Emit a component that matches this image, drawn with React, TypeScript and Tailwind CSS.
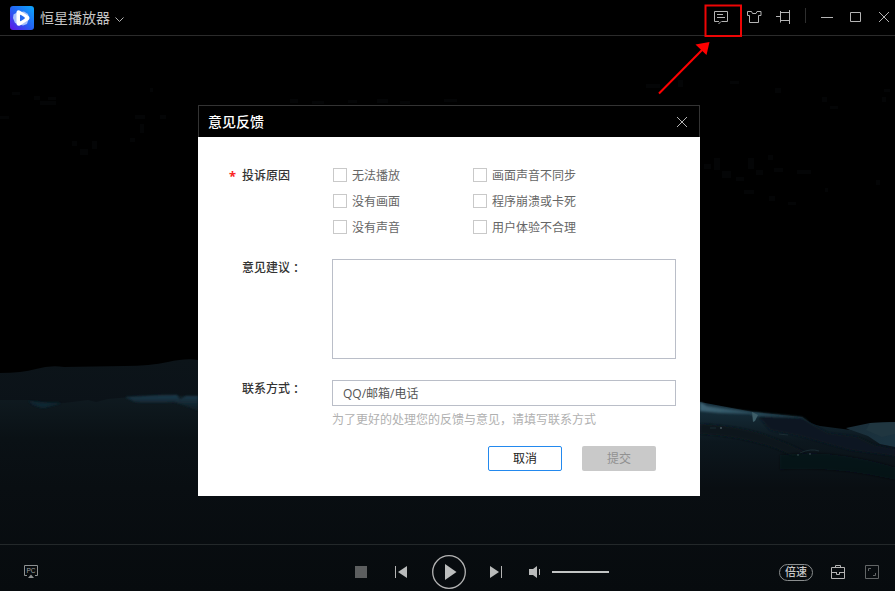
import type { ReactNode } from "react";

const reasons = [
  ["无法播放", "画面声音不同步"],
  ["没有画面", "程序崩溃或卡死"],
  ["没有声音", "用户体验不合理"],
];

// Faint compression blocks in the dark sky: x, y, width, height
const specks = [
  [12, 92, 8, 3], [34, 96, 6, 4], [40, 101, 16, 4], [48, 97, 8, 3], [0, 116, 9, 3], [72, 141, 5, 5], [80, 149, 8, 6],
  [92, 141, 5, 8], [135, 115, 10, 4], [140, 124, 4, 9], [130, 138, 5, 4], [160, 115, 6, 4], [150, 88, 3, 4],
  [290, 99, 8, 4], [312, 101, 12, 3], [348, 100, 9, 3], [377, 99, 11, 4], [400, 101, 10, 3], [444, 99, 13, 3],
  [646, 84, 14, 4], [678, 80, 5, 7], [730, 81, 9, 3], [775, 88, 6, 5], [822, 97, 5, 5], [830, 106, 8, 3],
  [884, 89, 6, 3], [882, 97, 4, 5], [704, 164, 7, 5], [714, 158, 6, 12], [722, 171, 9, 7], [736, 177, 8, 4],
  [748, 158, 6, 11], [756, 170, 7, 5], [768, 155, 5, 5], [774, 168, 9, 4], [797, 170, 14, 4], [744, 190, 10, 4],
  [769, 196, 6, 5], [788, 202, 8, 3], [825, 188, 3, 4], [876, 180, 4, 5],
];

function Scene() {
  return (
    <svg className="absolute inset-0" width="895" height="591" viewBox="0 0 895 591" fill="none">
      <defs>
        <linearGradient id="back" x1="0" y1="360" x2="0" y2="405" gradientUnits="userSpaceOnUse">
          <stop stopColor="#0c1419" />
          <stop offset="1" stopColor="#0b1218" />
        </linearGradient>
        <linearGradient id="front" x1="0" y1="396" x2="0" y2="591" gradientUnits="userSpaceOnUse">
          <stop stopColor="#0f1a20" />
          <stop offset=".22" stopColor="#0a1115" />
          <stop offset=".47" stopColor="#090e12" />
          <stop offset="1" stopColor="#070b0e" />
        </linearGradient>
        <linearGradient id="right" x1="0" y1="404" x2="0" y2="591" gradientUnits="userSpaceOnUse">
          <stop stopColor="#17303d" />
          <stop offset=".2" stopColor="#0c171e" />
          <stop offset=".45" stopColor="#090e12" />
          <stop offset="1" stopColor="#070b0e" />
        </linearGradient>
        <linearGradient id="far" x1="860" y1="422" x2="880" y2="447" gradientUnits="userSpaceOnUse">
          <stop stopColor="#1b2f3a" />
          <stop offset="1" stopColor="#1a3340" />
        </linearGradient>
        <linearGradient id="glow" x1="0" y1="395" x2="0" y2="422" gradientUnits="userSpaceOnUse">
          <stop stopColor="#1c3b4d" />
          <stop offset="1" stopColor="#0b141a" stopOpacity="0" />
        </linearGradient>
        <linearGradient id="snow" x1="700" y1="0" x2="808" y2="0" gradientUnits="userSpaceOnUse">
          <stop stopColor="#3f6576" />
          <stop offset=".5" stopColor="#294b5a" />
          <stop offset="1" stopColor="#1b333e" />
        </linearGradient>
        <filter id="soft" x="-10%" y="-30%" width="120%" height="160%">
          <feGaussianBlur stdDeviation="1" />
        </filter>
      </defs>
      {specks.map(([x, y, w, h]) => (
        <rect key={`${x}-${y}`} x={x} y={y} width={w} height={h} fill="#040506" />
      ))}
      <path d="M0 373Q22 373 36 369T64 367L125 366Q150 366 168 362T198 360V420H0Z" fill="url(#back)" />
      <path d="M0 400H28Q45 403 64 403L88 400 96 402 108 399 130 397 160 395 198 396V470L700 470V591H0Z" fill="url(#front)" />
      <g filter="url(#soft)">
        <path d="M125 397L157 395.500 177 395 180 399 186 396H198V411Q185 405 174 402Q150 403 135 402Z" fill="url(#glow)" />
        <path d="M28 401Q45 403 62 403L44 408Q34 407 28 401Z" fill="#102531" />
      </g>
      <path d="M846 428L870 423 895 422V451L874 442Z" fill="url(#far)" />
      <path d="M870 423L895 422V434L882 437 866 430Z" fill="#203640" />
      <path d="M700 402L753 412 802 417Q811 424 820 426L851 430 868 436 880 444 895 447V591H690V402Z" fill="url(#right)" />
      <g filter="url(#soft)">
        <path d="M700 402L707 406 752 412 802 417 808 421 781 417 758 417 750 414 720 413 700 411Z" fill="url(#snow)" />
        <path d="M758 416L802 418 817 427 828 433 858 437 874 445 895 449V456L850 450 800 436 770 430Z" fill="#0b1921" />
        <path d="M700 424Q740 426 765 435T805 452L793 456Q755 437 700 434Z" fill="#0a151c" />
      </g>
      <path d="M752 412L758 415 755 421 753 422Z" fill="#3e5e68" />
      <path d="M710 428H716M779 434L788 435M800 453Q811 448 819 451" stroke="#1b2c33" />
      <path d="M720 428H722M797 455H799M809 454H811" stroke="#65747a" />
      <g filter="url(#soft)">
        <path d="M780 455Q830 448 895 467V480Q830 466 780 470Z" fill="#0a0e11" opacity=".5" />
      </g>
    </svg>
  );
}

function Icon({ w, h, className = "", children }: { w: number; h: number; className?: string; children: ReactNode }) {
  return (
    <svg width={w} height={h} viewBox={`0 0 ${w} ${h}`} fill="none" stroke="#b4b4b4" className={`shrink-0 ${className}`}>
      {children}
    </svg>
  );
}

function TitleBar() {
  return (
    <header className="relative flex h-9 shrink-0 items-start border-b border-[#2b2b2b] bg-black">
      <svg className="mt-1.5 ml-2.5 shrink-0" width="24" height="24" viewBox="0 0 24 24">
        <defs>
          <linearGradient id="logo" x1="2" y1="23" x2="22" y2="2" gradientUnits="userSpaceOnUse">
            <stop stopColor="#5a1be6" />
            <stop offset=".5" stopColor="#2462f4" />
            <stop offset="1" stopColor="#109ffb" />
          </linearGradient>
        </defs>
        <rect width="24" height="24" rx="3" fill="url(#logo)" />
        <path d="M3.500 8.500L7 6.500 14 5.500 18 8 19 12 17 18 13 19.500 5 17 3 12Z" fill="#a8c1fb" />
        <path d="M6.500 6Q7 3.500 9.500 4.500L18.500 10Q20.500 12 18.500 14L10 19.500Q7 20.500 6.500 18Z" fill="#fff" />
        <path d="M10 9.500Q10 8.500 11 9L14.500 11.200Q15.300 12 14.500 12.800L11 15Q10 15.500 10 14.500Z" fill="#2468ee" />
      </svg>
      <h1 className="mt-[7px] ml-1.5 text-sm leading-5 text-[#c4c4c4]">恒星播放器</h1>
      <Icon w={9} h={6} className="mt-[17px] ml-[5px]"><path d="M.5 .5L4.500 4.500 8.500 .5" /></Icon>
      <div className="ml-auto flex h-[35px] items-start">
        <Icon w={14} h={14} className="mt-[11px]">
          <path d="M5 10.500H.5V.5H13.500V10.500H7.500M3 3.500H9M3 6.500H11M7 10.500L4.500 13" />
        </Icon>
        <Icon w={15} h={13} className="mt-[11px] ml-[19px]">
          <path d="M.5 .5H4.500L5.500 2.500H9L10 .5H14V4.500H11.500V11.500H2.500V4.500H.5Z" />
        </Icon>
        <Icon w={14} h={14} className="mt-[10px] ml-[14px]">
          <path d="M0 6.500H4.500M4.500 1V12.500M13.500 0V14M4.500 2.500H13.500M4.500 10.500H13.500" />
        </Icon>
        <div className="mt-2 ml-[15px] h-[15px] w-px bg-[#2e2e2e]" />
        <Icon w={12} h={2} className="mt-[17px] ml-[15px]"><path d="M0 .5H12" /></Icon>
        <Icon w={11} h={10} className="mt-3 ml-[17px]"><path d="M.5 .5H10.500V9.500H.5Z" /></Icon>
        <Icon w={10} h={10} className="mt-3 mr-1.5 ml-[18px]"><path d="M0 0L10 10M10 0L0 10" /></Icon>
      </div>
    </header>
  );
}

function FieldLabel({ children }: { children: ReactNode }) {
  return (
    <label className="flex w-[90px] font-medium text-[#333]">
      {children}
      <span className="ml-[3px]">：</span>
    </label>
  );
}

function FeedbackDialog() {
  return (
    <section className="absolute top-[105px] left-[198px] flex h-[391px] w-[502px] flex-col bg-white text-xs leading-4">
      <div className="flex h-8 items-center justify-between border border-b-0 border-[#333] bg-black pr-3 pl-[9px]">
        <h2 className="-mt-0.5 text-sm leading-5 font-medium text-white">意见反馈</h2>
        <Icon w={10} h={10}><path d="M0 0L10 10M10 0L0 10" /></Icon>
      </div>
      <div className="flex pt-[25px] pl-[30px]">
        <span className="mt-1.5 w-3.5 pl-px font-['Noto_Sans',sans-serif] text-[13px] font-bold text-[#fa2525]">*</span>
        <span className="mt-[5px] w-[91px] font-medium text-[#333]">投诉原因</span>
        <div className="grid grid-cols-[140px_140px]">
          {reasons.flat().map((reason) => (
            <label key={reason} className="flex h-[26px] items-center gap-[5px] text-[#666]">
              <span className="size-3.5 border border-[#c9c9c9] bg-white" />
              <span>{reason}</span>
            </label>
          ))}
        </div>
      </div>
      <div className="mt-[19px] flex pl-11">
        <FieldLabel>意见建议</FieldLabel>
        <textarea className="h-[100px] w-[344px] resize-none border border-[#babec8] bg-white" />
      </div>
      <div className="mt-[21px] flex pl-11">
        <FieldLabel>联系方式</FieldLabel>
        <div>
          <input
            className="block h-[26px] w-[344px] border border-[#babec8] bg-white px-2.5 font-['Open_Sans','Noto_Sans_CJK_SC',sans-serif] text-xs text-[#555] placeholder:text-[#555]"
            placeholder="QQ/邮箱/电话"
          />
          <p className="mt-[5px] text-[#b0b0b0]">为了更好的处理您的反馈与意见，请填写联系方式</p>
        </div>
      </div>
      <div className="mt-[19px] mr-11 flex justify-end gap-5">
        <button className="h-[25px] w-[74px] rounded-xs border border-[#2389ee] bg-white pb-px text-[#222]">取消</button>
        <button className="h-[25px] w-[74px] rounded-xs bg-[#c9c9c9] pb-px text-[#919191]">提交</button>
      </div>
    </section>
  );
}

function Controls() {
  return (
    <footer className="relative mt-auto flex h-[47px] shrink-0 items-center border-t border-[#23282a] pt-2">
      <svg width="14" height="14" viewBox="0 0 14 14" className="ml-6 shrink-0" fill="none" stroke="#8d9091">
        <path d="M3 10.500H.5V.5H13.500V10.500H11" />
        <path d="M4 13L7 9.500 10 13Z" fill="#8d9091" stroke="none" />
        <text x="2.500" y="8.200" fill="#a0a3a4" stroke="none" className="font-['Liberation_Sans',sans-serif] text-[6.500px]">PC</text>
      </svg>
      <div className="ml-[317px] size-3 bg-[#5c5e5f]" />
      <Icon w={12} h={12} className="ml-7"><path d="M.5 0V12" /><path d="M12 0V12L3 6Z" fill="#b9bbbb" stroke="none" /></Icon>
      <Icon w={34} h={34} className="ml-[25px]">
        <circle cx="17" cy="17" r="16.300" strokeWidth="1.300" />
        <path d="M13 9V25L24.500 17Z" fill="#bcbebe" stroke="none" />
      </Icon>
      <Icon w={12} h={12} className="ml-6"><path d="M0 0V12L9 6Z" fill="#b9bbbb" stroke="none" /><path d="M11.500 0V12" /></Icon>
      <Icon w={11} h={12} className="ml-[27px]"><path d="M0 3H4L8 0V12L4 9H0Z" fill="#b9bbbb" stroke="none" /><path d="M10.500 3V9" /></Icon>
      <div className="ml-3 h-0.5 w-[57px] bg-[#c2c4c4]" />
      <div className="ml-auto flex h-[17px] w-[34px] items-center justify-center rounded-full border border-[#8b8e8f] pb-px text-[11px] leading-none font-medium text-[#c8c8c8]">倍速</div>
      <Icon w={14} h={14} className="ml-[18px]">
        <path d="M.5 2.500H13.500V13.500H.5ZM4.500 2.500V.5H9.500V2.500M.5 7.500H5M9 7.500H13.500M5.500 7V9.500H8.500V7" />
      </Icon>
      <svg width="14" height="14" viewBox="0 0 14 14" fill="none" stroke="#626566" className="mr-4 ml-5 shrink-0">
        <path d="M.5 .5H13.500V13.500H.5ZM3.500 6V3.500H6M10.500 8V10.500H8" />
      </svg>
    </footer>
  );
}

export default function App() {
  return (
    <main className="relative flex h-[591px] w-[895px] flex-col overflow-hidden bg-black font-['Noto_Sans_CJK_SC',sans-serif]">
      <Scene />
      <TitleBar />
      <Controls />
      <FeedbackDialog />
      <svg className="absolute top-0 left-[650px]" width="100" height="100" viewBox="0 0 100 100" fill="none">
        <path d="M55.500 5.500H91V36H55.500Z" stroke="#ed0505" strokeWidth="2" />
        <path d="M9 93.500L55 47" stroke="#f00" strokeWidth="2" />
        <path d="M59.500 42L56.500 55 45.500 44.500Z" fill="#f00" />
      </svg>
    </main>
  );
}
